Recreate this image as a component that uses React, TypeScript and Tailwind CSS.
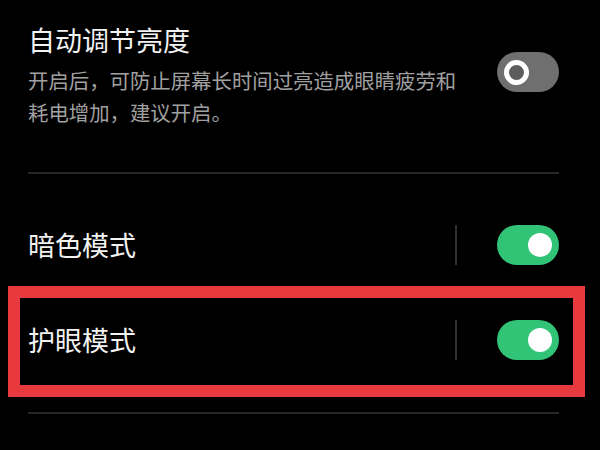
import { useState } from 'react'

function Toggle({ on, onClick }: { on: boolean; onClick: () => void }) {
  return (
    <button
      type="button"
      onClick={onClick}
      className={
        'flex h-[40px] w-[62px] shrink-0 items-center rounded-full px-[7px] ' +
        (on ? 'justify-end bg-[#31c477]' : 'justify-start bg-[#6f6f6f] pl-[7px]')
      }
    >
      {on ? (
        <span className="h-[24px] w-[24px] rounded-full bg-white" />
      ) : (
        <span className="h-[25px] w-[25px] rounded-full border-[5px] border-white bg-[#5c5c5c]" />
      )}
    </button>
  )
}

function SwitchRow({ label, on, onClick }: { label: string; on: boolean; onClick: () => void }) {
  return (
    <div className="flex h-[40px] items-center pl-[28px] pr-[41px]">
      <span className="flex-1 text-[27px] leading-[40px] text-[#f2f2f2]">{label}</span>
      <div className="mr-[40px] h-[40px] w-[2px] bg-[#2f2f2f]" />
      <Toggle on={on} onClick={onClick} />
    </div>
  )
}

export default function App() {
  const [auto, setAuto] = useState(false)
  const [dark, setDark] = useState(true)
  const [eye, setEye] = useState(true)

  return (
    <div
      className="h-[450px] w-[600px] overflow-hidden bg-black"
      style={{ fontFamily: '"Noto Sans CJK SC", "Noto Sans", sans-serif' }}
    >
      {/* auto brightness */}
      <div className="flex items-center pl-[28px] pr-[41px] pt-[22px]">
        <div className="flex-1">
          <div className="text-[27px] leading-[36px] text-[#f2f2f2]">自动调节亮度</div>
          <p className="mt-[6px] w-[440px] text-[20.4px] leading-[32px] text-[#a0a0a0]">
            开启后，可防止屏幕长时间过亮造成眼睛疲劳和耗电增加，建议开启。
          </p>
        </div>
        <div className="mb-[6px]">
          <Toggle on={auto} onClick={() => setAuto(!auto)} />
        </div>
      </div>

      <div className="ml-[28px] mr-[41px] mt-[44px] h-[2px] bg-[#262626]" />

      <div className="mt-[51px]">
        <SwitchRow label="暗色模式" on={dark} onClick={() => setDark(!dark)} />
      </div>

      <div className="relative mt-[55px]">
        <SwitchRow label="护眼模式" on={eye} onClick={() => setEye(!eye)} />
        {/* highlight annotation */}
        <div className="pointer-events-none absolute left-[8px] top-[-34px] h-[111px] w-[577px] border-[12px] border-[#e8393e]" />
      </div>

      <div className="ml-[28px] mr-[41px] mt-[52px] h-[2px] bg-[#262626]" />
    </div>
  )
}
